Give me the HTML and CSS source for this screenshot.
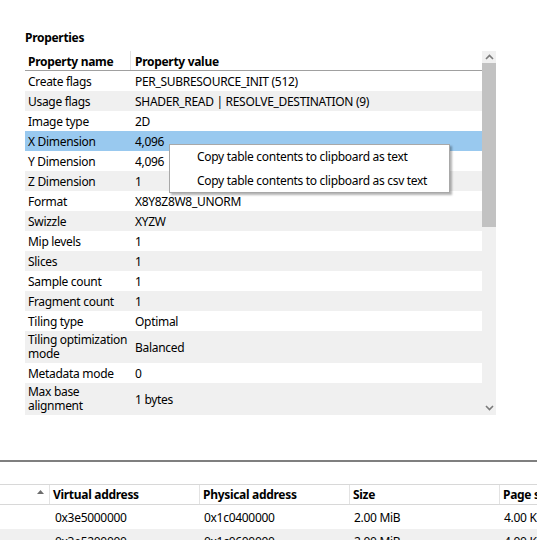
FILE: index.html
```html
<!DOCTYPE html>
<html>
<head>
<meta charset="utf-8">
<link rel="stylesheet" href="styles.css">
</head>
<body>
<div class="page">
  <section class="props">
    <div class="title">Properties</div>
    <div class="tablebox">
      <div class="table">
        <div class="row head">
          <div class="c1">Property name</div>
          <div class="c2">Property value</div>
        </div>
        <div class="row"><div class="c1">Create flags</div><div class="c2">PER_SUBRESOURCE_INIT (512)</div></div>
        <div class="row alt"><div class="c1">Usage flags</div><div class="c2">SHADER_READ | RESOLVE_DESTINATION (9)</div></div>
        <div class="row"><div class="c1">Image type</div><div class="c2">2D</div></div>
        <div class="row sel"><div class="c1">X Dimension</div><div class="c2">4,096</div></div>
        <div class="row"><div class="c1">Y Dimension</div><div class="c2">4,096</div></div>
        <div class="row alt"><div class="c1">Z Dimension</div><div class="c2">1</div></div>
        <div class="row"><div class="c1">Format</div><div class="c2">X8Y8Z8W8_UNORM</div></div>
        <div class="row alt"><div class="c1">Swizzle</div><div class="c2">XYZW</div></div>
        <div class="row"><div class="c1">Mip levels</div><div class="c2">1</div></div>
        <div class="row alt"><div class="c1">Slices</div><div class="c2">1</div></div>
        <div class="row"><div class="c1">Sample count</div><div class="c2">1</div></div>
        <div class="row alt"><div class="c1">Fragment count</div><div class="c2">1</div></div>
        <div class="row"><div class="c1">Tiling type</div><div class="c2">Optimal</div></div>
        <div class="row alt tall"><div class="c1">Tiling optimization mode</div><div class="c2">Balanced</div></div>
        <div class="row"><div class="c1">Metadata mode</div><div class="c2">0</div></div>
        <div class="row alt tall"><div class="c1">Max base alignment</div><div class="c2">1 bytes</div></div>
      </div>
      <div class="scrollbar">
        <div class="arrow up"><svg width="9" height="6" viewBox="0 0 9 6"><path d="M1 5 L4.5 1.5 L8 5" fill="none" stroke="#7a7a7a" stroke-width="1.6"/></svg></div>
        <div class="thumb"></div>
        <div class="track"></div>
        <div class="arrow down"><svg width="9" height="6" viewBox="0 0 9 6"><path d="M1 1 L4.5 4.5 L8 1" fill="none" stroke="#7a7a7a" stroke-width="1.6"/></svg></div>
      </div>
      <div class="menu">
        <div class="item">Copy table contents to clipboard as text</div>
        <div class="item">Copy table contents to clipboard as csv text</div>
      </div>
    </div>
  </section>
  <div class="splitter"></div>
  <section class="pages">
    <div class="prow phead">
      <div class="p0"><svg class="sort" width="7" height="4" viewBox="0 0 7 4"><path d="M0 4 L3.5 0 L7 4 Z" fill="#6d6d6d"/></svg></div>
      <div class="p1">Virtual address</div>
      <div class="p2">Physical address</div>
      <div class="p3">Size</div>
      <div class="p4">Page size</div>
    </div>
    <div class="prow">
      <div class="p0"></div>
      <div class="p1">0x3e5000000</div>
      <div class="p2">0x1c0400000</div>
      <div class="p3">2.00 MiB</div>
      <div class="p4">4.00 KiB</div>
    </div>
    <div class="prow alt">
      <div class="p0"></div>
      <div class="p1">0x3e5200000</div>
      <div class="p2">0x1c0600000</div>
      <div class="p3">2.00 MiB</div>
      <div class="p4">4.00 KiB</div>
    </div>
  </section>
</div>
</body>
</html>
```
FILE: styles.css
```css
html, body {
  margin: 0;
  padding: 0;
  background: #ffffff;
}
body {
  font-family: "Noto Sans", "Open Sans", sans-serif;
  font-size: 12px;
  letter-spacing: -0.3px;
  color: #000000;
  width: 537px;
  height: 540px;
  overflow: hidden;
}
.page {
  display: flex;
  flex-direction: column;
}
.props {
  padding: 30px 0 0 25px;
}
.title {
  font-weight: bold;
  height: 21px;
  line-height: 16px;
}
.tablebox {
  position: relative;
  display: flex;
  width: 471px;
  height: 364px;
}
.table {
  width: 457px;
  overflow: hidden;
}
.row {
  display: flex;
  height: 20px;
  align-items: center;
  background: #ffffff;
}
.row.alt { background: #f0f0f0; }
.row.sel { background: #99c9ef; }
.row.tall { height: 32px; }
.row.tall .c1 { line-height: 14px; }
.row.head {
  height: 19px;
  border-bottom: 1px solid #a0a0a0;
  font-weight: bold;
  align-items: stretch;
}
.row.head .c1,
.row.head .c2 {
  display: flex;
  align-items: center;
  padding-top: 1px;
}
.row.head .c1 {
  border-right: 1px solid #e3e3e3;
  width: 102px;
}
.c1 {
  width: 103px;
  padding-left: 3px;
  flex: none;
}
.c2 {
  padding-left: 4px;
  white-space: nowrap;
}
.scrollbar {
  width: 14px;
  display: flex;
  flex-direction: column;
  background: #f0f0f0;
}
.arrow {
  height: 12px;
  display: flex;
  align-items: center;
  justify-content: center;
}
.thumb {
  height: 164px;
  background: #c2c2c2;
}
.track { flex: 1; }
.arrow.down { height: 14px; }
.menu {
  position: absolute;
  left: 144px;
  top: 93px;
  width: 279px;
  padding: 0;
  background: #ffffff;
  border: 1px solid #a8a8a8;
  box-shadow: 2px 2px 2px rgba(0,0,0,0.3);
  display: flex;
  flex-direction: column;
  gap: 1px;
}
.menu .item {
  height: 23px;
  line-height: 23px;
  padding-left: 27px;
  white-space: nowrap;
}
.splitter {
  margin-top: 45px;
  height: 2px;
  background: #7f7f7f;
}
.pages {
  margin-top: 22px;
}
.prow {
  display: flex;
  height: 24px;
  align-items: center;
  white-space: nowrap;
}
.prow.alt { background: #f0f0f0; }
.prow.phead {
  height: 19px;
  border-top: 1px solid #d8d8d8;
  border-bottom: 1px solid #d8d8d8;
  font-weight: bold;
  align-items: stretch;
}
.p0, .p1, .p2, .p3, .p4 {
  flex: none;
  display: flex;
  align-items: center;
  overflow: hidden;
}
.p0 { width: 50px; justify-content: flex-end; }
.p1 { width: 150px; padding-left: 5px; box-sizing: border-box; }
.p2 { width: 150px; padding-left: 4px; box-sizing: border-box; }
.p3 { width: 150px; padding-left: 4px; box-sizing: border-box; }
.p4 { width: 37px; padding-left: 4px; box-sizing: border-box; }
.phead .p0 { border-right: 1px solid #e3e3e3; padding-right: 5px; width: 44px; align-items: flex-start; padding-top: 5px; box-sizing: content-box; height: 14px; }
.phead .p1 { border-right: 1px solid #e3e3e3; width: 150px; padding-left: 3px; }
.phead .p2 { border-right: 1px solid #e3e3e3; width: 150px; padding-left: 3px; }
.phead .p3 { border-right: 1px solid #e3e3e3; width: 150px; padding-left: 3px; }
.phead .p4 { padding-left: 3px; }
.sort { display: block; }
```
